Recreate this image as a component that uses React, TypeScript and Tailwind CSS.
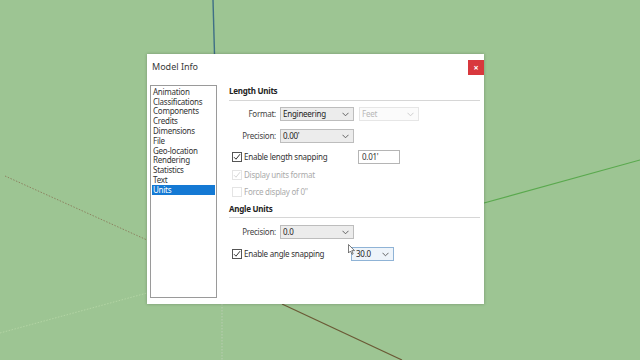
import React from "react"

const FONT = { fontFamily: '"Noto Sans", "DejaVu Sans", sans-serif' }

const PAGES = [
  "Animation",
  "Classifications",
  "Components",
  "Credits",
  "Dimensions",
  "File",
  "Geo-location",
  "Rendering",
  "Statistics",
  "Text",
  "Units",
]

function Chevron({ light }: { light?: boolean }) {
  return (
    <svg width="7" height="5" viewBox="0 0 7 5" className="shrink-0">
      <path d="M0.5 0.8 L3.5 3.8 L6.5 0.8" fill="none" stroke={light ? "#c8c8c8" : "#555"} strokeWidth="0.9" />
    </svg>
  )
}

function Select({ value, w, disabled, hover }: { value: string; w: string; disabled?: boolean; hover?: boolean }) {
  return (
    <div
      className={`${w} h-[14px] flex items-center justify-between pr-[4px] border ${hover ? "pl-[4px]" : "pl-[2px]"} ${
        disabled
          ? "border-[#e6e6e6] bg-[#fbfbfb] text-[#b8b8b8]"
          : hover
          ? "border-[#8fb3d6] bg-[#eef4fa] text-[#222]"
          : "border-[#bdbdbd] bg-[#ececec] text-[#222]"
      }`}
    >
      <span>{value}</span>
      <Chevron light={disabled} />
    </div>
  )
}

function Check({ checked, disabled }: { checked?: boolean; disabled?: boolean }) {
  return (
    <div
      className={`w-[10px] h-[10px] border flex items-center justify-center bg-white shrink-0 ${
        disabled ? "border-[#e4e4e4]" : "border-[#555]"
      }`}
    >
      {checked && (
        <svg width="8" height="8" viewBox="0 0 8 8">
          <path d="M1 4.2 L3 6.2 L7 1.2" fill="none" stroke={disabled ? "#d6d6d6" : "#333"} strokeWidth="1" />
        </svg>
      )}
    </div>
  )
}

function LabelRow({ label, children, className }: { label: string; children: React.ReactNode; className: string }) {
  return (
    <div className={`flex items-center h-[14px] ${className}`}>
      <span className="w-[48px] text-right text-[#444] pr-[1px]">{label}</span>
      <div className="ml-[3px] flex items-center gap-[5px]">{children}</div>
    </div>
  )
}

export default function App() {
  return (
    <div className="relative w-[640px] h-[360px] overflow-hidden bg-[#9dc593]" style={FONT}>
      {/* scene axes behind the dialog */}
      <svg className="absolute inset-0" width="640" height="360">
        <line x1="213" y1="0" x2="214.5" y2="54" stroke="#3f6f86" strokeWidth="1.4" />
        <line x1="5" y1="176" x2="147" y2="240" stroke="#8a7a5a" strokeWidth="0.9" strokeDasharray="1.5 1.5" />
        <line x1="0" y1="333" x2="147" y2="293" stroke="#b6d6a6" strokeWidth="0.9" strokeDasharray="1.5 1.5" />
        <line x1="222" y1="304" x2="222" y2="360" stroke="#b9cdb1" strokeWidth="1" strokeDasharray="1.5 1.5" />
        <line x1="282" y1="304" x2="402" y2="360" stroke="#6b5a36" strokeWidth="1.2" />
        <line x1="484" y1="203" x2="640" y2="160" stroke="#5aa94e" strokeWidth="1.2" />
      </svg>

      {/* Model Info dialog */}
      <div className="absolute left-[147px] top-[54px] w-[337px] h-[250px] bg-white shadow-[0_0_3px_rgba(0,0,0,0.25)] text-[8px] tracking-[-0.25px] leading-none">
        <div className="h-[31px] pl-[5px] pt-[8px] text-[9px] tracking-normal text-[#3a3a3a]">Model Info</div>
        <button className="absolute right-0 top-[6px] w-[16px] h-[15px] bg-[#d8383d] flex items-center justify-center text-white text-[9px] font-bold">
          ×
        </button>

        <div className="flex pl-[3px]">
          {/* page list */}
          <div className="w-[67px] h-[213px] border border-[#9a9a9a] pt-[1px] px-[1px]">
            {PAGES.map(p => (
              <div
                key={p}
                className={`h-[9.8px] flex items-center pl-[1px] ${
                  p === "Units" ? "bg-[#1479d4] text-white" : "text-[#333]"
                }`}
              >
                {p}
              </div>
            ))}
          </div>

          {/* units panel */}
          <div className="ml-[12px] w-[251px] flex flex-col">
            <div className="h-[12px] flex items-center font-bold text-[#222]">Length Units</div>
            <div className="mt-[3px] h-px bg-[#d6d6d6]" />

            <LabelRow label="Format:" className="mt-[6px]">
              <Select value="Engineering" w="w-[74px]" />
              <Select value="Feet" w="w-[60px]" disabled />
            </LabelRow>

            <LabelRow label="Precision:" className="mt-[8px]">
              <Select value="0.00'" w="w-[74px]" />
            </LabelRow>

            <div className="mt-[7px] h-[14px] flex items-center pl-[3px]">
              <Check checked />
              <span className="ml-[2px] w-[114px] text-[#333]">Enable length snapping</span>
              <div className="w-[42px] h-[14px] border border-[#b5b5b5] flex items-center pl-[3px] text-[#333]">0.01'</div>
            </div>

            <div className="mt-[4px] h-[14px] flex items-center pl-[3px]">
              <Check checked disabled />
              <span className="ml-[2px] text-[#aaa]">Display units format</span>
            </div>

            <div className="mt-[3px] h-[14px] flex items-center pl-[3px]">
              <Check disabled />
              <span className="ml-[2px] text-[#aaa]">Force display of 0"</span>
            </div>

            <div className="mt-[4px] h-[12px] flex items-center font-bold text-[#222]">Angle Units</div>
            <div className="mt-[2px] h-px bg-[#d6d6d6]" />

            <LabelRow label="Precision:" className="mt-[7px]">
              <Select value="0.0" w="w-[74px]" />
            </LabelRow>

            <div className="mt-[8px] h-[14px] flex items-center pl-[3px]">
              <Check checked />
              <span className="ml-[2px] w-[107px] text-[#333]">Enable angle snapping</span>
              <div className="relative">
                <Select value="30.0" w="w-[43px]" hover />
                {/* mouse pointer */}
                <svg className="absolute left-[-3px] top-[-3px]" width="7" height="11" viewBox="0 0 7 11">
                  <path d="M0.5 0.5 L0.5 9 L2.5 7 L4 10.3 L5.2 9.8 L3.8 6.6 L6.5 6.6 Z" fill="#fff" stroke="#444" strokeWidth="0.7" />
                </svg>
              </div>
            </div>
          </div>
        </div>
      </div>
    </div>
  )
}
